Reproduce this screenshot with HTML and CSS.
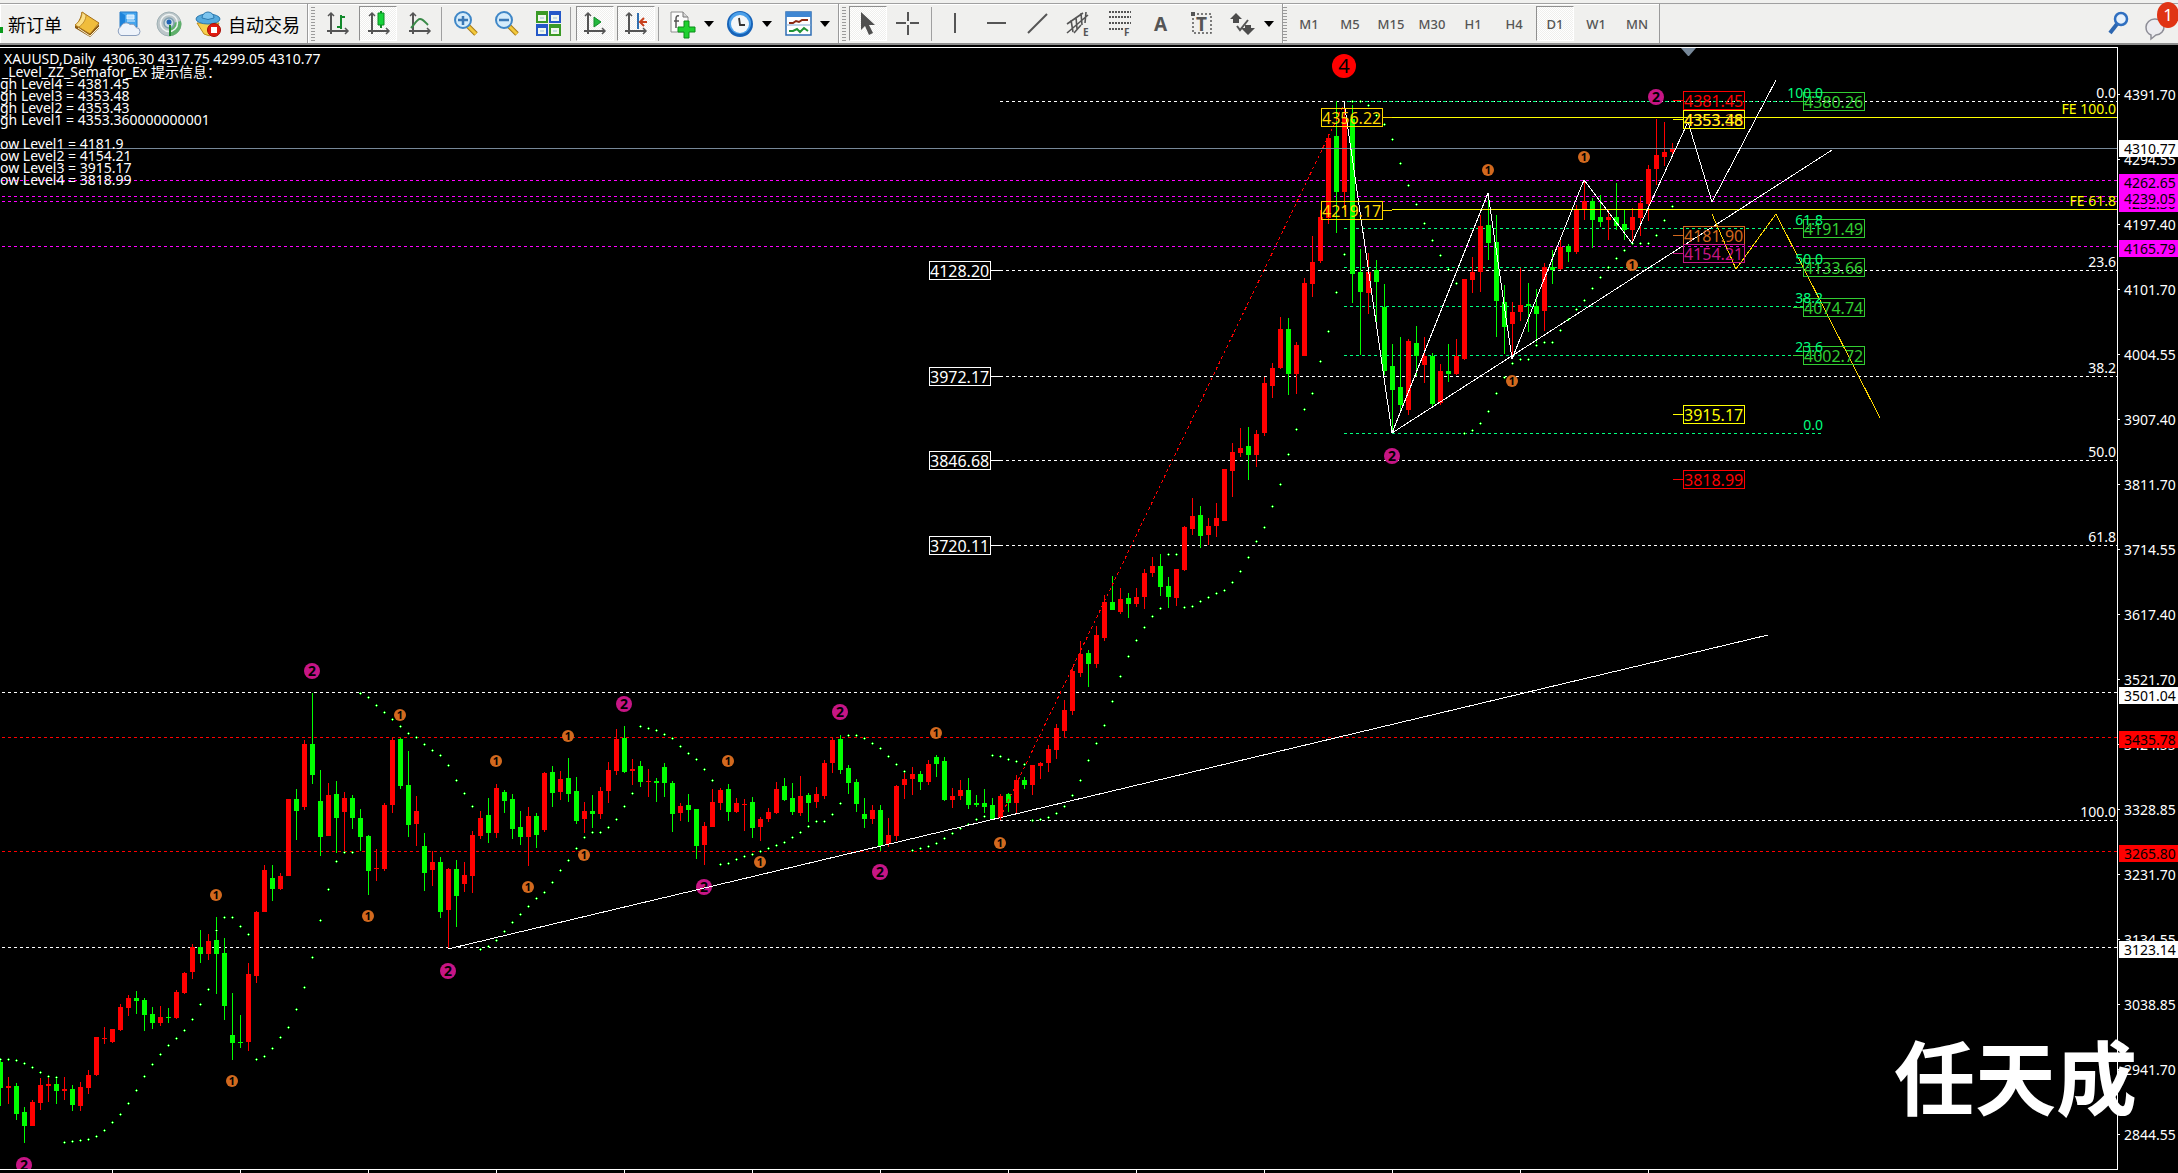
FILE: index.html
```html
<!DOCTYPE html>
<html lang="zh-CN">
<head>
<meta charset="utf-8">
<title>XAUUSD,Daily</title>
<link rel="stylesheet" href="styles.css">
</head>
<body>
<header class="toolbar">
  <div class="group group-first">
    <button class="tool labelled order" type="button">
      <svg class="edge-icon" viewBox="0 0 3 26"><path d="M0 16h3v6h-3z" fill="#0a9a1c"/></svg>
      <span>新订单</span>
    </button>
    <button class="tool" type="button" aria-label="市场报价">
      <svg class="icon" viewBox="0 0 26 26"><path d="M1 13l15 9 9-9v4l-9 9-15-9z" fill="#8a5a12"/><path d="M8 1l17 11-9 11L1 14c3-1 6-7 7-13z" fill="#f0bd3c" stroke="#a5701a"/><path d="M8 1c0 6-3 10-7 13l4 2c4-3 7-7 7-12z" fill="#fbe08a" stroke="#b27d20" stroke-width=".8"/><path d="M4 17l12 8 9-9" fill="none" stroke="#fff3cf"/></svg>
    </button>
    <button class="tool" type="button" aria-label="数据窗口">
      <svg class="icon" viewBox="0 0 26 26"><path d="M5 1h17v15H5z" fill="#45a5ee" stroke="#2479c4"/><path d="M5 1l5 3v13H5z" fill="#1d83da"/><path d="M12 4h7v4h-7zM12 10h8" fill="#bfe3ff" stroke="#e5f4ff"/><path d="M6 24.500a5 5 0 0 1 0-9 5.500 5.500 0 0 1 9-2 5 5 0 0 1 6 3 4 4 0 0 1 0 8z" fill="#eef3fa" stroke="#8b9fbe"/></svg>
    </button>
    <button class="tool" type="button" aria-label="信号">
      <svg class="icon" viewBox="0 0 26 26"><circle cx="13" cy="13" r="12" fill="#bcc6c9" stroke="#9fb0b4"/><path d="M13 13l12-3a12 12 0 0 1-11 15z" fill="#5fb06a"/><circle cx="13" cy="12" r="8.500" fill="none" stroke="#eef3f3" stroke-width="1.500"/><circle cx="13" cy="12" r="5" fill="#cddbe2" stroke="#7f9fb0" stroke-width="1.500"/><circle cx="13" cy="11" r="2.500" fill="#1e62b4"/><path d="M14 14v11" stroke="#258c35" stroke-width="2"/></svg>
    </button>
    <button class="tool labelled auto" type="button">
      <svg class="icon icon-wide" viewBox="0 0 28 26"><path d="M2 12h22l-5 12q-5 2-10-1z" fill="#f7d04c" stroke="#b98a1c"/><ellipse cx="13" cy="8" rx="12" ry="5" fill="#55a9dc" stroke="#2c79ae"/><path d="M7 7a6 6 0 0 1 12 0q-6 3-12 0z" fill="#7cc4ee" stroke="#2c79ae"/><circle cx="19" cy="19" r="6.500" fill="#e01b10" stroke="#a70d06"/><path d="M16 16h6v6h-6z" fill="#fff"/></svg>
      <span>自动交易</span>
    </button>
  </div>

  <div class="group">
    <span class="grip"></span>
    <button class="tool" type="button" aria-label="柱状图">
      <svg class="icon" viewBox="0 0 26 26"><g fill="none" stroke="#555" stroke-width="2"><path d="M7 3v20M3 20h21"/><path d="M4 5l3-3 3 3M21 17l3 3-3 3" stroke-width="1.500"/></g><path d="M17 4v14M17 6h4M13 16h4" stroke="#138a2c" stroke-width="2"/></svg>
    </button>
    <button class="tool on" type="button" aria-label="蜡烛图">
      <svg class="icon" viewBox="0 0 26 26"><g fill="none" stroke="#555" stroke-width="2"><path d="M7 3v20M3 20h21"/><path d="M4 5l3-3 3 3M21 17l3 3-3 3" stroke-width="1.500"/></g><path d="M16 0v17" stroke="#128a26" stroke-width="2"/><path d="M13 2h6v12h-6z" fill="#16d43a" stroke="#0c8a22"/></svg>
    </button>
    <button class="tool" type="button" aria-label="折线图">
      <svg class="icon" viewBox="0 0 26 26"><g fill="none" stroke="#555" stroke-width="2"><path d="M7 3v20M3 20h21"/><path d="M4 5l3-3 3 3M21 17l3 3-3 3" stroke-width="1.500"/></g><path d="M5 17c3-3 6-9 9-9s5 3 8 6" fill="none" stroke="#3a8a48" stroke-width="2"/></svg>
    </button>
    <span class="sep"></span>
    <button class="tool" type="button" aria-label="放大">
      <svg class="icon" viewBox="0 0 26 26"><path d="M15 15l8 8" stroke="#a97a15" stroke-width="5"/><path d="M15 15l8 8" stroke="#f3c93c" stroke-width="3"/><circle cx="10" cy="9" r="8" fill="#d5ecfb" stroke="#3f87c7" stroke-width="2"/><path d="M10 5v9M5 9h10" stroke="#3a78b5" stroke-width="2.500"/></svg>
    </button>
    <button class="tool" type="button" aria-label="缩小">
      <svg class="icon" viewBox="0 0 26 26"><path d="M15 15l8 8" stroke="#a97a15" stroke-width="5"/><path d="M15 15l8 8" stroke="#f3c93c" stroke-width="3"/><circle cx="10" cy="9" r="8" fill="#d5ecfb" stroke="#3f87c7" stroke-width="2"/><path d="M5 9h10" stroke="#3a78b5" stroke-width="2.500"/></svg>
    </button>
    <button class="tool" type="button" aria-label="平铺窗口">
      <svg class="icon" viewBox="0 0 26 26"><path d="M1 0h12v12H1zM14 13h12v12H14z" fill="#3a9a26"/><path d="M14 0h12v12H14zM1 13h12v12H1z" fill="#2458c8"/><path d="M3 4h8v6H3zM16 4h8v6h-8zM3 17h8v6H3zM16 17h8v6h-8z" fill="#f2f8ee"/><path d="M5 7h4M18 7h4M5 20h4M18 20h4" stroke="#9cc0d8"/></svg>
    </button>
    <span class="sep"></span>
    <button class="tool on" type="button" aria-label="自动滚动">
      <svg class="icon" viewBox="0 0 26 26"><g fill="none" stroke="#555" stroke-width="2"><path d="M6 3v20M2 20h21"/><path d="M3 5l3-3 3 3M20 17l3 3-3 3" stroke-width="1.500"/></g><path d="M12 6l7 5-7 5z" fill="#22b83c" stroke="#138a2c"/></svg>
    </button>
    <button class="tool on" type="button" aria-label="图表平移">
      <svg class="icon" viewBox="0 0 26 26"><g fill="none" stroke="#555" stroke-width="2"><path d="M6 3v20M2 20h21"/><path d="M3 5l3-3 3 3M20 17l3 3-3 3" stroke-width="1.500"/></g><path d="M15 2v16" stroke="#2f6fb0" stroke-width="2"/><path d="M17 11h7M21 7l-4 4 4 4" fill="none" stroke="#c8401c" stroke-width="2"/></svg>
    </button>
    <span class="sep"></span>
    <button class="tool drop" type="button" aria-label="指标">
      <svg class="icon" viewBox="0 0 26 26"><path d="M2 1h12l5 5v15H2z" fill="#fbfbfb" stroke="#8c8c8c"/><path d="M14 1v5h5" fill="#d8d8d8" stroke="#777"/><path d="M10 5q-3-1-3 3v9M5 10h5" fill="none" stroke="#555" stroke-width="1.500"/><path d="M15 10h5v6h6v5h-6v6h-5v-6H9v-5h6z" fill="#1fd12f" stroke="#0b8d18"/></svg>
      <span class="arrow"></span>
    </button>
    <button class="tool drop" type="button" aria-label="时间周期">
      <svg class="icon" viewBox="0 0 26 26"><circle cx="13" cy="13" r="13" fill="#1763b8"/><circle cx="13" cy="12" r="11" fill="#4ba0ea"/><circle cx="13" cy="13" r="9" fill="#f3f6f8"/><path d="M12 7l1 7h5" fill="none" stroke="#333" stroke-width="1.800"/></svg>
      <span class="arrow"></span>
    </button>
    <button class="tool drop" type="button" aria-label="模板">
      <svg class="icon" viewBox="0 0 26 26"><path d="M1 1h25v23H1z" fill="#fff" stroke="#2e6db4" stroke-width="1.500"/><path d="M1 1h25v5H1z" fill="#3e86d2"/><path d="M1 14h25" stroke="#7fa9d4"/><path d="M4 12h4l3-2 3 1 3-2h6" fill="none" stroke="#8c2a12" stroke-width="2"/><path d="M4 20h4l4-2 3 3 4-4 4 3" fill="none" stroke="#1f9434" stroke-width="2"/></svg>
      <span class="arrow"></span>
    </button>
  </div>

  <div class="group">
    <span class="grip"></span>
    <button class="tool on" type="button" aria-label="光标">
      <svg class="icon" viewBox="0 0 26 26"><path d="M6 1v18l4-4 4 9 4-2-4-8h6z" fill="#4f4f4f"/></svg>
    </button>
    <button class="tool" type="button" aria-label="十字准线">
      <svg class="icon" viewBox="0 0 26 26"><path d="M12 1v9M12 14v10M0 12h10M14 12h9" stroke="#555" stroke-width="2"/></svg>
    </button>
    <span class="sep"></span>
    <button class="tool" type="button" aria-label="垂直线">
      <svg class="icon" viewBox="0 0 26 26"><path d="M12 2v20" stroke="#555" stroke-width="2"/></svg>
    </button>
    <button class="tool" type="button" aria-label="水平线">
      <svg class="icon" viewBox="0 0 26 26"><path d="M3 12h19" stroke="#555" stroke-width="2"/></svg>
    </button>
    <button class="tool" type="button" aria-label="趋势线">
      <svg class="icon" viewBox="0 0 26 26"><path d="M3 22L22 3" stroke="#555" stroke-width="2"/></svg>
    </button>
    <button class="tool" type="button" aria-label="等距通道">
      <svg class="icon" viewBox="0 0 26 26"><path d="M1 13L17 2M1 22L22 4M8 22l7-8M5 9l2 12M10 6l1 12M15 2l1 12M20 1l-1 11" stroke="#555" stroke-width="1.600"/><text class="icon-text" x="17" y="25">E</text></svg>
    </button>
    <button class="tool" type="button" aria-label="斐波那契">
      <svg class="icon" viewBox="0 0 26 26"><path d="M2 1h22M2 6h22M2 12h22M2 18h15" stroke="#555" stroke-width="2" stroke-dasharray="2 1"/><text class="icon-text" x="17" y="25">F</text></svg>
    </button>
    <button class="tool" type="button" aria-label="文字">
      <svg class="icon" viewBox="0 0 26 26"><text class="icon-text big" x="6" y="20">A</text></svg>
    </button>
    <button class="tool" type="button" aria-label="文本标签">
      <svg class="icon" viewBox="0 0 26 26"><path d="M4 3h18v19H4z" fill="none" stroke="#555" stroke-width="1.500" stroke-dasharray="2 2"/><path d="M2 1h4v4H2z" fill="#555"/><text class="icon-text big" x="7" y="20">T</text></svg>
    </button>
    <button class="tool drop" type="button" aria-label="箭头">
      <svg class="icon" viewBox="0 0 26 26"><path d="M7 2l6 6h-3v4H4V8H1zM16 14h6v3h4l-7 7-7-7h4z" fill="#4c4c4c"/><path d="M8 15l3 4 8-10" fill="none" stroke="#555" stroke-width="2"/></svg>
      <span class="arrow"></span>
    </button>
  </div>

  <div class="group group-periods">
    <span class="grip"></span>
    <button class="tool period" type="button">M1</button>
    <button class="tool period" type="button">M5</button>
    <button class="tool period" type="button">M15</button>
    <button class="tool period" type="button">M30</button>
    <button class="tool period" type="button">H1</button>
    <button class="tool period" type="button">H4</button>
    <button class="tool period on" type="button">D1</button>
    <button class="tool period" type="button">W1</button>
    <button class="tool period" type="button">MN</button>
  </div>

  <div class="status">
    <button class="tool" type="button" aria-label="搜索">
      <svg class="icon" viewBox="0 0 26 26"><path d="M11 13l-7 9" stroke="#2c66b0" stroke-width="4"/><circle cx="15" cy="8" r="6" fill="#e7f1fb" stroke="#2f6fc0" stroke-width="2.500"/></svg>
    </button>
    <button class="tool chat" type="button" aria-label="通知">
      <svg class="icon" viewBox="0 0 26 26"><path d="M1 16a9 8 0 1 1 10 8l-5 4v-4q-5-2-5-8z" fill="#ececf0" stroke="#8d8d96" stroke-width="1.500"/></svg>
      <span class="badge">1</span>
    </button>
  </div>
</header>

<main class="chart">
  <div class="plot">
    <svg class="canvas" role="img" aria-label="XAUUSD 日线图"><g id="plot"></g></svg>
    <div class="comment">
      <p class="title">XAUUSD,Daily&nbsp; 4306.30 4317.75 4299.05 4310.77</p>
      <p class="name">_Level_ZZ_Semafor_Ex 提示信息：</p>
      <ul class="levels">
        <li>gh Level4 = 4381.45</li>
        <li>gh Level3 = 4353.48</li>
        <li>gh Level2 = 4353.43</li>
        <li>gh Level1 = 4353.360000000001</li>
      </ul>
      <ul class="levels">
        <li>ow Level1 = 4181.9</li>
        <li>ow Level2 = 4154.21</li>
        <li>ow Level3 = 3915.17</li>
        <li>ow Level4 = 3818.99</li>
      </ul>
    </div>
  </div>
  <svg class="price-axis" aria-label="价格"><g id="axis"></g></svg>
  <svg class="time-axis" aria-hidden="true"><g id="time"></g></svg>
  <p class="watermark">任天成</p>
</main>
<script src="chart.js"></script>
</body>
</html>
```
FILE: styles.css
```css
* { box-sizing: border-box; }

body {
  margin: 0;
  min-height: 100vh;
  display: flex;
  flex-direction: column;
  background: #000;
  font-family: "Noto Sans", "Noto Sans CJK SC", sans-serif;
  font-size: 14px;
}

p, ul { margin: 0; padding: 0; list-style: none; }

/* ---------- toolbar ---------- */
.toolbar {
  display: flex;
  height: 45px;
  padding-top: 3px;
  background: #f0f0ee;
  border-bottom: 2px solid #8f8f8f;
}

.group {
  display: flex;
  align-items: center;
  gap: 3px;
  padding: 0 3px;
  border-top: 1px solid #a0a0a0;
  border-right: 1px solid #9a9a9a;
  box-shadow: inset 1px 1px 0 #fff;
}

.group-first { padding-left: 0; }
.group-periods { padding-left: 0; }

.grip {
  width: 4px;
  height: 34px;
  background: repeating-linear-gradient(#9a9a9a 0 1px, #f0f0ee 1px 3px);
}

.sep {
  width: 1px;
  height: 34px;
  margin-right: 2px;
  background: #a0a0a0;
}

.tool {
  display: flex;
  align-items: center;
  justify-content: center;
  width: 38px;
  height: 35px;
  padding: 0;
  border: 1px solid transparent;
  background: none;
  color: #555;
  font: inherit;
  position: relative;
}

.tool.on {
  border-color: #8f8f8f #fff #fff #8f8f8f;
  background: repeating-conic-gradient(#fff 0 25%, #efefed 0 50%) 0 0 / 2px 2px;
}

.tool.drop { width: 55px; gap: 9px; }

.tool.labelled {
  width: auto;
  color: #000;
  font-size: 18px;
  white-space: nowrap;
}

.tool.order { gap: 5px; padding-right: 2px; border-left: 0; }
.tool.auto { gap: 5px; padding: 0 3px; }
.tool.period { font-size: 13px; font-weight: 500; }

.icon { width: 26px; height: 26px; flex: none; overflow: visible; }
.icon-wide { width: 28px; }
.edge-icon { width: 3px; height: 26px; }

.icon-text {
  font: bold 10px "Noto Sans", sans-serif;
  fill: #555;
}
.icon-text.big { font-size: 19px; }

.arrow {
  border: 5px solid transparent;
  border-top: 6px solid #000;
  border-bottom: 0;
}

.status {
  flex: 1;
  display: flex;
  align-items: center;
  justify-content: flex-end;
  border-top: 1px solid #a0a0a0;
}

.tool.chat { width: 40px; overflow: visible; }

.badge {
  position: absolute;
  right: -2px;
  top: -5px;
  width: 22px;
  height: 26px;
  border-radius: 50%;
  background: #e03414;
  color: #fff;
  font-size: 17px;
  line-height: 25px;
  text-align: center;
}

/* ---------- chart ---------- */
.chart {
  flex: 1;
  position: relative;
  display: grid;
  grid-template-columns: minmax(0, 1fr) 60px;
  grid-template-rows: minmax(600px, 1fr) 3px;
  padding-top: 2px;
  background: #000;
}

.plot {
  position: relative;
  border: 1px solid #fff;
  border-left: 0;
  overflow: hidden;
}

.canvas { position: absolute; width: 100%; height: 100%; }
.price-axis { grid-column: 2; grid-row: 1 / 3; width: 60px; height: 100%; }
.time-axis { grid-column: 1; grid-row: 2; width: 100%; height: 3px; }

svg text { font-family: "Noto Sans", sans-serif; }
.small { font-size: 14px; }
.boxed { font-size: 16px; }
.crisp { shape-rendering: crispEdges; fill: none; }

.comment {
  position: absolute;
  left: 0;
  top: 4px;
  color: #fff;
  line-height: 12px;
}
.title { padding-left: 4px; line-height: 13px; }
.name { padding-left: 2px; line-height: 13px; }
.levels { margin-bottom: 12px; }

.watermark {
  position: absolute;
  right: 41px;
  bottom: 39px;
  color: #fff;
  font-family: "Noto Sans CJK SC", sans-serif;
  font-size: 81px;
  font-weight: 700;
  line-height: 120px;
}
```
FILE: chart.js
```js
const NS = 'http://www.w3.org/2000/svg';
const STEP = 8;
const RED = '#ff0000';
const GREEN = '#00ff00';

// Each run of bars: first bar number, y origin, units per pixel,
// then "direction high top bottom low" for every bar.
const runs = [
  { first: 0, base: 640, unit: 2.942, bars: `
    g 1239 1242 1317 1370,r 1286 1311 1317 1365,g 1303 1311 1394 1411,g 1373 1389 1430 1480,
    r 1353 1359 1430 1430,r 1289 1309 1361 1383,r 1287 1306 1311 1359,g 1283 1306 1327 1365,
    r 1286 1321 1327 1353,g 1309 1321 1368 1386,r 1300 1315 1371 1386,r 1265 1280 1317 1336,
    r 1167 1167 1280 1283,r 1138 1170 1173 1190,r 1144 1144 1183 1186,r 1071 1080 1147 1150,
    r 1044 1053 1083 1106,g 1033 1053 1062 1100,g 1053 1059 1103 1150,g 1080 1100 1127 1144,
    r 1077 1109 1127 1136,g 1083 1109 1112 1127,r 1030 1036 1112 1115,r 977 980 1038 1041,
    r 894 903 977 997,g 853 904 924 950,r 865 885 924 941,g 815 883 924 1041,
    g 877 921 1077 1118,g 1038 1162 1186 1236,g 1103 1183 1186 1200,r 950 983 1183 1209,
    r 797 800 988 1009,r 662 677 800 800,g 662 700 733 768,r 685 694 733 736,
    r 468 468 694 694,g 438 468 503 588,r 294 306 491 500,g 156 306 397 424,
    g 382 474 580 635,r 421 456 577 577,g 415 453 524 627,r 447 465 506 627,
    g 456 465 524 556,g 497 524 580 621,g 574 577 680 750,r 615 671 674 709,
    r 480 485 674 680,r 286 294 485 509,g 288 291 430 438,g 327 427 544 580,
    r 459 503 541 606,g 568 606 685 738,r 621 653 677 724,g 638 653 800 818,
    r 671 674 794 909,g 647 674 753 844,r 653 691 718 741,r 562 574 694 744,
    r 503 524 577 585,g 465 515 568 597,r 424 435 568 582,g 441 447 474 509,
    g 453 468 556 585,g 503 550 580 603,r 491 518 580 665,g 509 518 574 612` },
  { first: 68, base: 640, unit: 3, bars: `
    r 396 399 570 576,g 378 396 459 501,r 393 417 456 480,g 354 414 462 486,
    g 411 453 543 552,r 486 513 537 579,g 465 513 522 564,r 441 453 522 537,
    r 366 390 453 489,r 267 297 393 405,g 258 294 396 399,r 357 387 393 435,
    g 363 378 426 441,r 387 423 426 471,g 414 423 429 486,g 369 381 429 471,
    g 423 429 522 576,r 489 498 519 543,g 462 495 510 546,g 507 507 618 657,
    r 546 558 615 675,r 447 486 561 561,r 444 450 489 510,g 432 447 516 543,
    r 474 489 516 519,r 477 492 495 573,g 471 486 564 594,r 531 537 561 603,
    r 504 516 537 546,r 426 447 519 522,g 414 438 480 483,g 429 474 516 525,
    r 408 468 519 528,g 459 465 489 546,r 441 462 486 504,r 360 369 468 477,
    r 294 300 369 399,g 285 297 390 402,g 375 384 429 462,g 417 426 492 516,
    g 474 522 537 564,r 495 510 537 552,g 495 510 618 633,r 534 585 612 621,
    r 435 438 588 603,r 399 417 435 477,r 381 402 417 465,g 393 402 426 450,
    r 360 372 426 435,g 345 351 372 411,g 351 363 480 483,r 444 468 480 504,
    r 420 450 468 480,g 414 450 495 507,g 465 489 495 501,g 447 489 501 519,
    g 474 495 537 540` },
  { first: 125, base: 480, unit: 3, bars: `
    r 942 948 1014 1020,g 939 942 969 996,r 885 900 969 1002,g 891 900 915 927,
    r 855 855 915 945,r 846 849 858 897,r 795 807 849 876,r 732 744 810 837,
    r 660 690 753 774,r 561 573 693 705,r 483 522 579 591,g 510 519 552 621,
    r 438 465 552 564,r 345 366 474 483,g 288 366 390 390,r 324 357 396 402,
    g 339 354 372 414,r 324 351 372 381,r 267 279 351 387,r 231 258 279 291,
    g 222 258 321 348,g 291 318 351 384,r 267 267 354 378,r 138 141 270 273,
    r 54 108 147 165,g 78 105 168 204,r 114 138 165 195,r 69 114 138 171` },
  { first: 153, base: 40, unit: 3, bars: `
    r 1287 1287 1443 1443,r 1209 1236 1293 1371,r 1164 1224 1239 1251,g 1161 1218 1245 1320,
    r 1170 1182 1245 1281,r 1011 1029 1179 1188,r 969 984 1038 1074,r 831 867 984 987,
    g 834 867 1002 1065,r 906 915 1002 1062,r 714 729 948 948,r 588 666 732 771,
    r 510 531 663 669,r 282 294 534 552,g 183 288 456 579,r 183 234 456 510,
    g 195 237 702 789,g 627 696 756 945,r 639 696 759 822,g 660 690 726 864,
    g 732 801 993 1005,g 912 978 1050 1180,g 891 1041 1095 1116,r 897 903 1110 1125,
    g 858 909 948 1008,r 891 948 975 1029,g 939 948 1092 1098,r 972 993 1089 1095,
    g 912 993 1002 1026,r 897 948 1002 1005,r 717 717 957 960,r 651 696 720 759,
    r 525 558 696 756,g 462 555 609 660,g 525 606 783 891,g 735 786 861 942,
    r 786 816 852 951,r 684 795 816 843,g 729 792 798 876,g 747 798 822 909,
    r 669 681 813 873,g 630 681 690 732,r 600 621 687 690,g 612 618 636 666,
    r 495 507 636 642,r 420 483 507 540,g 474 483 540 624,g 465 531 546 561,
    r 510 531 540 600,g 429 531 558 570,g 510 552 570 600,r 504 531 570 609,
    r 468 489 534 588,r 375 387 492 543,r 237 345 387 435,r 246 336 351 378,
    r 309 324 336 345` },
];

// Parabolic SAR, same units as the bars.
const sar = [
  { first: 0, base: 640, unit: 2.942, dots: [
    1234, 1234, 1237, 1245, 1257, 1272, 1284, 1287, 1478, 1475, 1472, 1469, 1460, 1443, 1419,
    1395, 1363, 1325, 1284, 1248, 1219, 1192, 1172, 1148, 1116, 1072, 1028, 854, 816, 816, 842,
    866, 1234, 1225, 1201, 1169, 1139, 1086, 1022, 934, 825, 734, 651, 625, 625, 157, 169, 192,
    213, 233, 254, 275, 286, 307, 325, 339, 369, 413, 451, 489, 910, 901, 883, 857, 831, 807,
    783, 760] },
  { first: 68, base: 640, unit: 3, dots: [
    757, 727, 691, 661, 625, 592, 577, 577, 562, 538, 499, 460, 259, 265, 271, 283, 295, 319,
    340, 358, 388, 421, 673, 670, 658, 649, 643, 634, 625, 616, 607, 592, 577, 559, 544, 544,
    523, 490, 286, 286, 295, 310, 325, 349, 373, 394, 631, 625, 619, 610, 595, 580, 565, 553,
    538, 529, 346, 349, 358, 364, 373] },
  { first: 129, base: 480, unit: 3, dots: [
    1021, 1018, 1012, 1000, 979, 946, 901, 841, 790, 736, 664, 589, 529, 481, 442, 409, 385,
    223, 223, 382, 379, 364, 352, 340, 331, 307, 274, 232, 184, 142, 79] },
  { first: 160, base: 40, unit: 3, dots: [
    1333, 1243, 1168, 1108, 1060, 964, 874, 757, 643, 184, 184, 196, 226, 253, 298, 370, 436,
    493, 550, 601, 646, 688, 730, 1180, 1171, 1150, 1114, 1060, 1012, 970, 958, 958, 916, 907,
    907, 871, 838, 808, 781, 745, 712, 682, 655, 631, 610, 610, 610, 586, 541, 499] },
];

// y, colour, start x, end x (null runs to the right edge), dash
const levels = [
  [692, '#fff', 2, null, '3 3'], [947, '#fff', 2, null, '3 3'],
  [737, RED, 2, null, '3 3'], [851, RED, 2, null, '3 3'],
  [180, '#ff00ff', 2, null, '3 3'], [196, '#ff00ff', 2, null, '3 3'],
  [201, '#ff00ff', 2, null, '3 3'], [246, '#ff00ff', 2, null, '3 3'],
  [101, '#fff', 1000, null, '3 3'], [270, '#fff', 1000, null, '3 3'],
  [376, '#fff', 1000, null, '3 3'], [460, '#fff', 1000, null, '3 3'],
  [545, '#fff', 1000, null, '3 3'], [820, '#fff', 1000, null, '3 3'],
  [101, '#00ff7f', 1347, 1821, '3 3'], [228, '#00ff7f', 1344, 1821, '3 3'],
  [267, '#00ff7f', 1344, 1821, '3 3'], [306, '#00ff7f', 1344, 1821, '3 3'],
  [355, '#00ff7f', 1344, 1821, '3 3'], [433, '#00ff7f', 1344, 1821, '3 3'],
  [148, '#778899', 0, null, ''],
  [117, '#ffff00', 1392, null, ''], [209, '#ffff00', 1392, null, ''],
];

const trendLines = [
  ['#fff', '1344,101 1392,433 1488,193 1512,359 1584,180 1632,243 1688,122 1712,202 1776,80'],
  ['#fff', '1392,433 1832,150'],
  ['#fff', '448,949 1768,635'],
  ['#ffd700', '1712,214 1736,269 1776,214 1880,418'],
  [RED, '1000,818 1344,104', '3 3'],
];

// text, colour, box left, line y, connector start, connector end
const priceLabels = [
  ['4128.20', '#fff', 929, 270, 991, 1000], ['3972.17', '#fff', 929, 376, 991, 1000],
  ['3846.68', '#fff', 929, 460, 991, 1000], ['3720.11', '#fff', 929, 545, 991, 1000],
  ['4356.22', '#ffd700', 1321, 117, 1383, 1392], ['4219.17', '#ffd700', 1321, 210, 1383, 1392],
  ['4381.45', RED, 1683, 100, 1673, 1683],
  ['4353.36', '#d2691e', 1683, 119, 1673, 1683], ['4353.43', '#c71585', 1683, 119, 1673, 1683],
  ['4353.48', '#ffff00', 1683, 119, 1673, 1683],
  ['4181.90', '#d2691e', 1683, 235, 1673, 1683], ['4154.21', '#c71585', 1683, 253, 1673, 1683],
  ['3915.17', '#ffff00', 1683, 414, 1673, 1683], ['3818.99', RED, 1683, 479, 1673, 1683],
  ['4380.26', '#32cd32', 1803, 101, 1793, 1803], ['4191.49', '#32cd32', 1803, 228, 1793, 1803],
  ['4133.66', '#32cd32', 1803, 267, 1793, 1803], ['4074.74', '#32cd32', 1803, 307, 1793, 1803],
  ['4002.72', '#32cd32', 1803, 355, 1793, 1803],
];

const greenRatios = [['100.0', 101], ['61.8', 228], ['50.0', 267], ['38.2', 306], ['23.6', 355], ['0.0', 433]];
const edgeRatios = [
  ['0.0', 101, '#fff'], ['FE 100.0', 117, '#ffff00'], ['FE 61.8', 209, '#ffff00'], ['23.6', 270, '#fff'],
  ['38.2', 376, '#fff'], ['50.0', 460, '#fff'], ['61.8', 545, '#fff'], ['100.0', 820, '#fff'],
];

const semafor = {
  1: { fill: '#d2691e', r: 6, size: 11, at: [[216, 895], [232, 1081], [400, 715], [368, 916],
    [496, 761], [528, 887], [568, 736], [584, 855], [728, 761], [760, 862], [936, 733],
    [1000, 843], [1488, 170], [1512, 381], [1584, 157], [1632, 265]] },
  2: { fill: '#c71585', r: 8, size: 14, at: [[24, 1165], [312, 671], [448, 971], [624, 704],
    [704, 887], [840, 712], [880, 872], [1392, 456], [1656, 97]] },
  4: { fill: RED, r: 12, size: 20, at: [[1344, 66]] },
};

const scalePrices = ['4391.70', '4294.55', '4197.40', '4101.70', '4004.55', '3907.40', '3811.70',
  '3714.55', '3617.40', '3521.70', '3424.55', '3328.85', '3231.70', '3134.55', '3038.85',
  '2941.70', '2844.55'];
const scaleTags = [
  ['4310.77', 140, '#fff', '#000'], ['4262.65', 174, '#ff00ff', '#000'],
  ['4232.30', 195, '#ff00ff', '#000'], ['4239.05', 190, '#ff00ff', '#000'],
  ['4165.79', 240, '#ff00ff', '#000'], ['3501.04', 687, '#fff', '#000'],
  ['3435.78', 731, RED, '#000'], ['3265.80', 845, RED, '#000'], ['3123.14', 941, '#fff', '#000'],
];

function add(parent, tag, attrs, text) {
  const el = document.createElementNS(NS, tag);
  for (const key in attrs) el.setAttribute(key, attrs[key]);
  if (text !== undefined) el.textContent = text;
  parent.appendChild(el);
  return el;
}

const rect = (g, x, y, w, h, fill) => add(g, 'rect', { x, y, width: w, height: h, fill });

function drawBars(g) {
  for (const run of runs) {
    run.bars.split(',').forEach((line, i) => {
      const [dir, ...raw] = line.trim().split(' ');
      const [high, top, bottom, low] = raw.map(v => Math.round(run.base + v / run.unit));
      const x = (run.first + i) * STEP;
      const fill = dir === 'r' ? RED : GREEN;
      rect(g, x, high, 1, Math.max(1, low - high), fill);
      rect(g, x - 2, top, 5, Math.max(1, bottom - top), fill);
    });
  }
}

function drawSar(g) {
  for (const run of sar) {
    run.dots.forEach((v, i) => {
      const x = (run.first + i) * STEP;
      const y = Math.floor(run.base + v / run.unit);
      rect(g, x - 1, y, 3, 1, GREEN);
      rect(g, x, y - 1, 1, 3, GREEN);
      rect(g, x, y, 1, 1, '#fff');
    });
  }
}

function drawPlot() {
  const g = document.getElementById('plot');
  g.setAttribute('transform', 'translate(0 -48)');
  for (const [y, stroke, x1, x2, dash] of levels.slice(0, -3)) {
    add(g, 'line', { class: 'crisp', x1, x2: x2 || '100%', y1: y + 0.5, y2: y + 0.5, stroke, 'stroke-dasharray': dash });
  }
  drawBars(g);
  drawSar(g);
  for (const [digit, m] of Object.entries(semafor)) {
    for (const [cx, cy] of m.at) {
      add(g, 'circle', { cx, cy, r: m.r, fill: m.fill });
      add(g, 'text', { x: cx, y: cy + Math.round(m.size * 0.36), 'font-size': m.size,
        'font-weight': digit === '4' ? 400 : 700, 'text-anchor': 'middle' }, digit);
    }
  }
  for (const [y, stroke, x1] of levels.slice(-3)) {
    add(g, 'line', { class: 'crisp', x1, x2: '100%', y1: y + 0.5, y2: y + 0.5, stroke });
  }
  for (const [stroke, points, dash] of trendLines) {
    add(g, 'polyline', { class: 'crisp', points, stroke, 'stroke-dasharray': dash || 'none' });
  }
  for (const [text, colour, x, y, from, to] of priceLabels) {
    add(g, 'rect', { class: 'crisp', x: x + 0.5, y: y - 8.5, width: 61, height: 18, stroke: colour });
    rect(g, from, y, to - from, 1, colour);
    add(g, 'text', { class: 'boxed', x: x + 1, y: y + 7, fill: colour }, text);
  }
  for (const [text, y] of greenRatios) {
    add(g, 'text', { class: 'small', x: 1823, y: y - 3, fill: '#00ff7f', 'text-anchor': 'end' }, text);
  }
  for (const [text, y, fill] of edgeRatios) {
    add(g, 'text', { class: 'small', x: '100%', dx: -1, y: y - 3, fill, 'text-anchor': 'end' }, text);
  }
  add(g, 'path', { d: 'M1681 48h15l-7 8h-1z', fill: '#778899' });
}

function drawAxes() {
  const g = document.getElementById('axis');
  g.setAttribute('transform', 'translate(0 -47)');
  scalePrices.forEach((text, i) => {
    const y = 94 + i * 65;
    rect(g, 0, y, 2, 1, '#fff');
    add(g, 'text', { class: 'small', x: 6, y: y + 6, fill: '#fff' }, text);
  });
  for (const [text, y, fill, ink] of scaleTags) {
    rect(g, 1, y, 59, 17, fill);
    add(g, 'text', { class: 'small', x: 6, y: y + 14, fill: ink }, text);
  }
  const time = document.getElementById('time');
  for (let x = 112; x <= 1648; x += 128) rect(time, x, 0, 1, 3, '#fff');
}

drawPlot();
drawAxes();
```
